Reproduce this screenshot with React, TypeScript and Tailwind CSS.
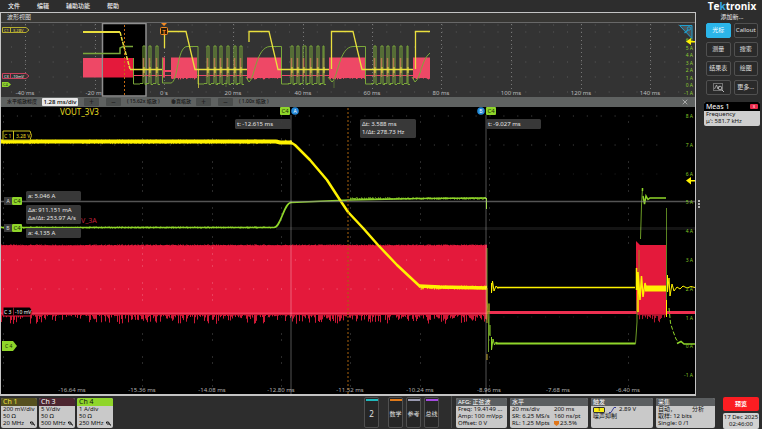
import React from 'react';
import { X } from 'lucide-react';

const YELLOW = '#fff200';
const GREEN = '#8fd52a';
const RED = '#e4193b';
const PINK = '#ee4866';

// small deterministic noise source for the traces
const noise = (i: number) => {
  const v = Math.sin(i * 12.9898) * 43758.5453;
  return v - Math.floor(v);
};

const range = (from: number, to: number, step: number) => {
  const out: number[] = [];
  for (let v = from; v <= to; v += step) out.push(v);
  return out;
};

const drips = (from: number, to: number, base: number, depth: number) =>
  range(from, to, 1)
    .map(x => `M${x + 0.5} ${base}v${(1 + Math.pow(noise(x), 3) * depth).toFixed(1)}`)
    .join('');

const fuzz = (from: number, to: number, y: number, amp: number) =>
  range(from, to, 1)
    .map(x => `M${x + 0.5} ${(y - noise(x) * amp).toFixed(1)}V${(y + noise(x + 7) * amp).toFixed(1)}`)
    .join('');

const Dots = ({ xs, ys, color }: { xs: number[]; ys: number[]; color: string }) => (
  <path d={xs.map(x => ys.map(y => `M${x} ${y}h1`).join('')).join('')} stroke={color} strokeWidth="1" />
);

const overviewTicks = [
  [25, '-40 ms'], [95, '-20 ms'], [164, '0 s'], [233, '20 ms'], [303, '40 ms'],
  [372, '60 ms'], [441, '80 ms'], [511, '100 ms'], [581, '120 ms'], [650, '140 ms'],
] as const;

const overviewBlocks = [[171, 26], [247, 34], [329, 36], [413, 17]];

const pulses = [
  [143, 145], [149, 151], [156, 158], [207, 209], [214, 216], [220, 222], [227, 229], [234, 236], [240, 242],
  [291, 293], [297, 299], [303, 306], [310, 312], [317, 319], [323, 324],
  [374, 376], [381, 383], [387, 389], [393, 395], [400, 402], [407, 408],
];

const pulsePath = pulses.map(([a, b]) => `M${a - 3} 83.5H${a}V46H${b}V84.5h2`).join('');

const Overview = () => (
  <svg viewBox="1 23 694 74" className="block h-auto w-full bg-[#333333]" fontFamily="Noto Sans, sans-serif">
    <Dots xs={range(11, 690, 13.9)} ys={[25, 32, 47, 62, 77, 92]} color="#5a5a5a" />
    {overviewTicks.map(([x, label]) => (
      <g key={label}>
        <path d={`M${x + 0.5} 24V90`} stroke="#777" strokeDasharray="1 3" />
        <text x={x} y="95" fontSize="6" fill="#bdbdbd" textAnchor="middle">{label}</text>
      </g>
    ))}
    <rect x="83" y="58" width="20" height="19.5" fill={PINK} />
    {overviewBlocks.map(([x, w]) => (
      <g key={x}>
        <rect x={x} y="57.5" width={w} height="20" fill={PINK} />
        <path d={drips(x, x + w - 1, 77, 1.5)} stroke={PINK} />
      </g>
    ))}
    <rect x="162" y="57.5" width="3" height="20" fill={PINK} />
    <path d="M165 71h6" stroke={PINK} strokeWidth="2" />
    <rect x="102.5" y="23.5" width="43.5" height="72.5" fill="#000" stroke="#8f8f8f" strokeWidth="1.5" />
    <rect x="103" y="58" width="30" height="19.5" fill={RED} />
    <path d="M133 75.5H430" stroke={PINK} strokeWidth="1" />
    {pulses.map(([a]) => (
      <path key={a} d={`M${a + 0.5} 58V77`} stroke={PINK} strokeWidth="1.5" />
    ))}
    <g fill="none" stroke="#7ba83a" strokeWidth="1">
      <path d="M83 53.5H120V48L123 46.5H133" strokeWidth="1.5" />
      <path d="M133.500 58V84H140" />
      <path d={pulsePath} />
      <path d="M162.500 58V83H171C178 82 177 47 187 46.500H198V84H204" />
      <path d="M246 77L249 82C255 78 256 47 270 46.500H281.500V84H289" />
      <path d="M328 77L332 82C338 78 339 47 353 46.500H365.500V84H372" />
      <path d="M412 77L415 82C421 78 421 60 430 53" />
      <path d="M334 80V88M226 80V87" strokeWidth="0.5" />
    </g>
    <g fill="none" stroke="#e9df3e">
      <path d="M83 32H120" strokeWidth="2" />
      <path d="M120 32L130 69" strokeWidth="1.5" strokeDasharray="4 1" />
      <path d="M130 69.500H162" strokeWidth="1.5" />
      <path d="M164.500 48V31.500H186L195 69.500H247" strokeWidth="1.3" />
      <path d="M249 42V31.500H269L278 69.500H329" strokeWidth="1.3" />
      <path d="M331.500 69V31.500H353L362 69.500H413" strokeWidth="1.3" />
      <path d="M415.500 69V31.500H430" strokeWidth="1.3" />
      <path d={pulses.map(([a]) => `M${a + 1} 67v6`).join('')} />
      <path d="M198.500 70V88" strokeWidth="0.7" />
    </g>
    <path d="M124.500 25V96" stroke="#c66a12" strokeDasharray="2 2" />
    <path d="M161 23h6l-3 3z" fill="#f28a24" />
    <rect x="160.500" y="27.500" width="7" height="7" rx="1" fill="#2a1a08" stroke="#f28a24" />
    <text x="164" y="33.500" fontSize="6" fontWeight="700" fill="#f28a24" textAnchor="middle">T</text>

    <path d="M2.500 27.500H26L29 30L26 32.500H2.500Z" fill="#333" stroke="#b5ad2e" />
    <path d="M10.500 27.500v5" stroke="#b5ad2e" />
    <text x="4" y="32" fontSize="4" fill="#e9df3e">C1</text>
    <text x="13" y="32" fontSize="4" fill="#e9df3e">3.28V</text>
    <path d="M2.500 73.500H26L29 76L26 78.500H2.500Z" fill="#333" stroke="#c9405b" />
    <path d="M10.500 73.500v5" stroke="#c9405b" />
    <text x="4" y="78" fontSize="4" fill="#eee">C3</text>
    <text x="12" y="78" fontSize="4" fill="#eee">-10mV</text>
    <path d="M2 82H8L11 84.500L8 87H2Z" fill={GREEN} />
    <text x="3" y="86" fontSize="4" fill="#233">C4</text>

    <path d="M679.500 25.500H692V38.500Z" fill="#4b5459" stroke="#1f9fce" />
    <circle cx="689" cy="28.500" r="1.700" fill="none" stroke="#1f9fce" />
    <path d="M688 30L684.500 33" stroke="#1f9fce" strokeWidth="1.200" />
    {['6 A', '5 A', '4 A', '3 A', '2 A', '1 A', '0 A', '-1 A'].map((t, i) => (
      <text key={t} x="693" y={42 + i * 7.5} fontSize="5" fill="#8fce32" textAnchor="end">{t}</text>
    ))}
    <path d="M686 41.500L691 38V41H695V42.500H691V45Z" fill={YELLOW} />
  </svg>
);

const mainTicks = [
  [72, '-16.64 ms'], [142, '-15.36 ms'], [212, '-14.08 ms'], [281, '-12.80 ms'], [350, '-11.52 ms'],
  [420, '-10.24 ms'], [489, '-8.96 ms'], [558, '-7.68 ms'], [628, '-6.40 ms'],
] as const;

const Readout = ({ x, y, w, lines }: { x: number; y: number; w: number; lines: string[] }) => (
  <g>
    <rect x={x} y={y} width={w} height={lines.length * 9 + 1} rx="1.500" fill="#3b3b3b" fillOpacity="0.95" />
    {lines.map((line, i) => (
      <text key={line} x={x + 2} y={y + 7 + i * 8} fontSize="6" fill="#e6e6e6">{line}</text>
    ))}
  </g>
);

const SourceBadge = ({ x, y }: { x: number; y: number }) => (
  <g>
    <rect x={x} y={y} width="10" height="8" rx="1" fill={GREEN} />
    <text x={x + 5} y={y + 6} fontSize="6" fill="#1c2c08" textAnchor="middle">C4</text>
  </g>
);

const CursorKnob = ({ x, name }: { x: number; name: string }) => (
  <g>
    <circle cx={x} cy="111" r="3.800" fill="#2387d6" />
    <text x={x} y="113" fontSize="5" fill="#fff" textAnchor="middle">{name}</text>
  </g>
);

const ZoomView = () => (
  <svg viewBox="1 107 694 287" className="block h-auto w-full bg-black" fontFamily="Noto Sans, sans-serif">
    <Dots xs={range(3, 670, 13.9)} ys={[116, 145]} color="#4a4a4a" />
    <Dots xs={range(3, 670, 13.9)} ys={[174, 317]} color="#222" />
    <Dots
      xs={[3, 142, 212, 281, 350, 420, 489, 628]}
      ys={[122, 139, 162, 168, 179, 185, 191, 208, 214, 220, 237, 243, 334, 340, 357, 363, 380, 386]}
      color="#555"
    />
    {mainTicks.map(([x, label]) => (
      <text key={label} x={x} y="392" fontSize="6" fill="#b0b0b0" textAnchor="middle">{label}</text>
    ))}
    <text x="60" y="115" fontSize="8" fill="#e8df22">VOUT_3V3</text>
    <text x="81" y="223" fontSize="7" fill="#c4203c">V_3A</text>

    {/* switch node */}
    <rect x="1" y="245.500" width="486" height="69" fill={RED} />
    <path d={fuzz(1, 486, 245.5, 1)} stroke={RED} strokeWidth="1" />
    <path d="M1 313.500H487" stroke="#f23a5a" strokeWidth="2" />
    <path d={drips(1, 486, 314, 9)} stroke="#cf1836" />
    <path d="M487 312.500H695" stroke="#ee2f50" strokeWidth="3" />
    <rect x="636" y="245" width="30.500" height="69" fill={RED} />
    <path d="M636 241L641 246H636Z" fill={RED} />
    <path d={drips(637, 665, 314, 9)} stroke="#b5152f" />
    <Dots xs={range(3, 480, 13.9)} ys={[260, 289]} color="#f06a80" />
    <Dots xs={[142, 212]} ys={[248, 254, 266, 283, 295, 300]} color="#f06a80" />

    {/* load current */}
    <g fill="none" stroke={GREEN}>
      <path d="M1 227.500H274C281 227 284 203 291 202.500L350 200L420 198.500L486 198" strokeWidth="1.700" />
      <path d={fuzz(1, 273, 227.5, 1.2)} strokeWidth="0.700" />
      <path d={fuzz(350, 485, 198.5, 1.3)} strokeWidth="0.800" />
      <path d="M486.500 198V209" />
      <path d="M487 248V300L488.500 320V352M489 303V335" stroke="#6d9c26" />
      <path d="M490 325V336M491.500 337V350L493 339L494.500 345L496 342L498 343.500" />
      <path d="M496 343.500H635.500" strokeWidth="2" />
      <path d="M635.500 344L637 322V300M640.500 239L641.500 205L642.500 188" stroke="#6d9c26" />
      <path d="M642.500 188V191M643 196L644.500 204L646 196L648 199.500L650 198H666" strokeWidth="1.500" />
      <path d="M639 300V250" stroke="#8f8d20" />
      <path d="M666.500 208V315" stroke="#5a8420" />
      <path d="M669 308L670.500 323L673 331L676 339L679 343" strokeDasharray="4 2" />
      <path d="M677 343.500L681 341.500L684 344H695" strokeWidth="1.500" />
    </g>

    {/* output rail */}
    <g fill="none" stroke={YELLOW}>
      <path d="M1 141.500H276L280 142.500H292" strokeWidth="4" />
      <path d={fuzz(1, 290, 141.8, 2.4)} strokeWidth="0.600" />
      <path d="M291 142.500L295 145L310 160L327 180L340 200L348 212L363 228L378 245L397 265L420 286.500" strokeWidth="2.500" strokeLinejoin="round" />
      <path d="M419 286L440 287L487 288" strokeWidth="3.500" />
      <path d={fuzz(421, 486, 287.5, 2.2)} strokeWidth="0.700" />
      <path d="M487 288V323M487 354V360M489 304V312" stroke="#c2a51c" />
      <path d="M491.500 283V293L492.500 281L494 291L496 286L498 288.500" />
      <path d="M497 287.500H635" strokeWidth="1.500" />
      <path d="M636.500 290V268M638 312V272L640 300L641.500 276L643 297L645 283L647 291" strokeWidth="1.500" />
      <path d="M645 288.500H666" strokeWidth="6" />
      <path d="M666.500 300V317M667.500 275V292L669 278L670 296L672 284L674 291L677 287L680 289L683 286L687 288L691 286.500L695 287.500" />
    </g>

    {/* cursors */}
    <path d="M1 201.500H695" stroke="#8c8c8c" strokeOpacity="0.600" strokeWidth="1.500" />
    <path d="M276 228.500H695" stroke="#fff" strokeOpacity="0.080" strokeWidth="3" />
    <path d="M291 115V394M486 115V394" stroke="#fff" strokeOpacity="0.160" strokeWidth="2" />
    <path d="M348 108V394" stroke="#a8620f" strokeDasharray="2 2" />
    <SourceBadge x={280} y={107} />
    <CursorKnob x={295} name="A" />
    <CursorKnob x={481} name="B" />
    <SourceBadge x={486} y={107} />
    <Readout x={235} y={119} w={56} lines={['t: -12.615 ms']} />
    <Readout x={360} y={119} w={56} lines={['Δt: 3.588 ms', '1/Δt: 278.73 Hz']} />
    <Readout x={486} y={119} w={55} lines={['t: -9.027 ms']} />
    <Readout x={26} y={191} w={55} lines={['a: 5.046 A']} />
    <Readout x={26} y={205} w={55} lines={['Δa: 911.151 mA', 'Δa/Δt: 253.97 A/s']} />
    <Readout x={26} y={228} w={55} lines={['a: 4.135 A']} />
    {[['A', 197], ['B', 224]].map(([name, y]) => (
      <g key={name}>
        <rect x="4" y={y} width="8" height="8" fill="#3b3b3b" />
        <text x="8" y={Number(y) + 6} fontSize="5" fill="#ddd" textAnchor="middle">{name}</text>
        <SourceBadge x={12} y={Number(y)} />
      </g>
    ))}

    {/* channel handles */}
    <path d="M3 131H30Q33 135.500 30 140H3Z" fill="#000" stroke="#c9bf1c" />
    <path d="M13.500 131v9" stroke="#c9bf1c" />
    <text x="4" y="138" fontSize="5" fill="#e8df22">C 1</text>
    <text x="16" y="138" fontSize="5" fill="#e8df22">3.28 V</text>
    <path d="M3 307H30Q34 311.500 30 316H3Z" fill="#000" stroke={RED} />
    <path d="M13.500 307v9" stroke="#8a1428" />
    <text x="4" y="314" fontSize="5" fill="#fff">C 3</text>
    <text x="15" y="314" fontSize="5" fill="#fff">-10 mV</text>
    <path d="M2 341H13L17 346L13 351H2Z" fill={GREEN} />
    <text x="5" y="348" fontSize="5" fill="#1c2c08">C 4</text>

    {['8 A', '7 A', '6 A', '5 A', '4 A', '3 A', '2 A', '1 A', '0 A', '-1 A'].map((t, i) => (
      <text key={t} x="693" y={118 + i * 28.8} fontSize="5" fill="#84c728" textAnchor="end">{t}</text>
    ))}
    <path d="M686 180.500L691 177V180H695V181.500H691V184.500Z" fill={YELLOW} />
  </svg>
);

const ZoomStep = ({ label, sign }: { label: string; sign: string }) => (
  <button aria-label={label} className="flex h-2 w-[15px] items-center justify-center rounded-[1px] bg-[#4a4d4c] text-[8px] leading-none text-[#222]">
    {sign}
  </button>
);

const ZoomBar = () => (
  <div className="flex h-[10px] items-center bg-[#5f6261] px-[6px] text-[5px] font-medium text-[#151515]">
    <label htmlFor="zoom-scale" className="w-[35px] whitespace-nowrap">水平缩放标度</label>
    <input
      id="zoom-scale"
      defaultValue="1.28 ms/div"
      className="h-2 w-9 rounded-[1px] bg-[#e8e8e8] text-center text-[6px] leading-none text-black"
    />
    <div className="ml-[6px] flex gap-[7px]">
      <ZoomStep label="增加水平缩放" sign="+" />
      <ZoomStep label="减少水平缩放" sign="−" />
    </div>
    <span className="ml-[6px] w-[44px] whitespace-nowrap">( 15.62x 缩放 )</span>
    <span className="w-[25px] whitespace-nowrap">垂直缩放</span>
    <div className="flex gap-[7px]">
      <ZoomStep label="增加垂直缩放" sign="+" />
      <ZoomStep label="减少垂直缩放" sign="−" />
    </div>
    <span className="ml-[6px] whitespace-nowrap">( 1.00x 缩放 )</span>
    <button aria-label="关闭缩放" className="ml-auto text-[#d0d0d0]">
      <X className="h-2 w-2" />
    </button>
  </div>
);

const DockButton = ({ children, active, label }: { children: React.ReactNode; active?: boolean; label?: string }) => (
  <button
    aria-label={label}
    className={`flex h-[15px] items-center justify-center rounded-[2px] border text-[6px] whitespace-nowrap ${
      active ? 'border-[#2bb5e9] bg-[#2bb5e9] text-white' : 'border-[#505050] bg-[#2a2a2a] text-[#e0e0e0]'
    }`}
  >
    {children}
  </button>
);

const Dock = () => (
  <aside className="w-[60px] shrink-0 px-[2px]">
    <div className="flex h-3 items-center justify-center font-['Open_Sans',sans-serif] text-[10px] leading-none font-bold text-white">
      <span>Te<span className="text-[#35a8e0]">k</span>tronix</span>
    </div>
    <div className="h-[11px] pt-[1px] text-center text-[6px] leading-[8px] text-[#eeeeee]">添加新...</div>
    <div className="grid grid-cols-2 gap-x-[3px] gap-y-1 px-[2px]">
      <DockButton active>光标</DockButton>
      <DockButton>Callout</DockButton>
      <DockButton>测量</DockButton>
      <DockButton>搜索</DockButton>
      <DockButton>结果表</DockButton>
      <DockButton>绘图</DockButton>
      <DockButton label="缩放区域">
        <svg viewBox="0 0 13 11" className="h-[11px] w-[13px]" fill="none" stroke="#b8b8b8">
          <rect x="1.500" y="1.500" width="9" height="7" strokeDasharray="1 1" />
          <path d="M2.500 7L4.500 3L6 7L7.500 4" strokeWidth="0.800" />
          <circle cx="8" cy="6" r="1.800" strokeWidth="0.900" />
          <path d="M9.500 7.500L12 10" />
        </svg>
      </DockButton>
      <DockButton>更多...</DockButton>
    </div>
    <section className="mt-[7px] overflow-hidden rounded-[2px] bg-[#cfcfcf] text-[6px] leading-[7px] text-[#111]">
      <header className="flex h-[9px] items-center justify-between bg-black px-[2px] text-[7px] text-white">
        Meas 1
        <span className="flex h-[5px] w-2 items-center justify-center rounded-[1px] bg-[#e92b4b] text-[4px] leading-none">3</span>
      </header>
      <div className="px-[2px] pb-[1px]">
        <p>Frequency</p>
        <p>μ': 581.7 kHz</p>
      </div>
    </section>
  </aside>
);

const channels = [
  { name: 'Ch 1', head: 'bg-[#55501f] text-[#f0e442]', scale: '200 mV/div', bw: '20 MHz' },
  { name: 'Ch 3', head: 'bg-[#4c2630] text-white', scale: '5 V/div', bw: '500 MHz' },
  { name: 'Ch 4', head: 'bg-[#8fd52a] text-[#111]', scale: '1 A/div', bw: '250 MHz' },
];

const addButtons = [
  { name: '2', bar: 'bg-[#1fb9bd]', cls: 'mr-[6px] text-[8px]' },
  { name: '数学', bar: 'bg-[#e07a1a]', cls: 'text-[6px]' },
  { name: '参考', bar: 'bg-[#9a9ab0]', cls: 'text-[6px]' },
  { name: '总线', bar: 'bg-[#a44be0]', cls: 'text-[6px]' },
];

const Panel = ({ title, className, children }: { title: string; className: string; children: React.ReactNode }) => (
  <section className={`h-[30px] shrink-0 overflow-hidden rounded-[2px] bg-[#c9c9c9] text-[6px] leading-[7px] text-[#111] ${className}`}>
    <h2 className="h-2 bg-[#5b5e60] px-[2px] leading-[8px] text-white">{title}</h2>
    <div className="px-[2px] whitespace-nowrap">{children}</div>
  </section>
);

const BottomBar = () => (
  <footer className="flex items-start pr-[3px] pb-[1px] pl-[1px]">
    <div className="flex gap-[2px] pt-[2px]">
      {channels.map(ch => (
        <section key={ch.name} className="h-[30px] w-9 overflow-hidden rounded-[2px] bg-[#c9c9c9] text-[6px] leading-[7px] text-[#111]">
          <h2 className={`h-2 px-[2px] text-[7px] leading-[8px] ${ch.head}`}>{ch.name}</h2>
          <div className="px-[2px] whitespace-nowrap">
            <p>{ch.scale}</p>
            <p>50 Ω</p>
            <p className="flex items-center justify-between">
              {ch.bw}
              <svg viewBox="0 0 5 5" className="h-[5px] w-[5px]" fill="none" stroke="#111">
                <path d="M0.500 2.500V1h2L4 4h1M1 3h2" />
              </svg>
            </p>
          </div>
        </section>
      ))}
    </div>
    <div className="ml-auto flex gap-[3px] pt-[1px]">
      {addButtons.map(b => (
        <button key={b.name} className={`flex h-[31px] w-[15px] flex-col items-center rounded-[2px] border border-[#505050] bg-[#262626] text-[#e0e0e0] ${b.cls}`}>
          <span className={`mt-[1px] h-[2px] w-3 shrink-0 ${b.bar}`} />
          <span className="flex flex-1 items-center whitespace-nowrap">{b.name}</span>
        </button>
      ))}
    </div>
    <div className="ml-[12px] flex gap-[3px] border-l border-[#4a4a4a] pt-[2px] pl-1">
      <Panel title="AFG: 正弦波" className="w-[51px]">
        <p>Freq: 19.4149 ...</p>
        <p>Amp: 100 mVpp</p>
        <p>Offset: 0 V</p>
      </Panel>
      <Panel title="水平" className="w-[78px]">
        <div className="grid grid-cols-[42px_1fr]">
          <span>20 ms/div</span><span>200 ms</span>
          <span>SR: 6.25 MS/s</span><span>160 ns/pt</span>
          <span>RL: 1.25 Mpts</span>
          <span className="flex items-center gap-[1px]">
            <svg viewBox="0 0 5 5" className="h-[5px] w-[5px]"><path d="M0 0h5v3L2.500 5L0 3z" fill="#e0761a" /></svg>
            23.5%
          </span>
        </div>
      </Panel>
      <Panel title="触发" className="w-[62px]">
        <p className="flex items-center">
          <span className="flex h-[6px] w-3 items-center justify-center rounded-[1px] border border-[#333] bg-[#f7ec13]">1</span>
          <svg viewBox="0 0 7 6" className="ml-1 h-[6px] w-[7px]" fill="none" stroke="#3b3f9a"><path d="M0 5.500h2L5 0.500h2" /></svg>
          <span className="ml-[3px]">2.89 V</span>
        </p>
        <p>噪声抑制</p>
      </Panel>
      <Panel title="采集" className="w-[59px]">
        <p className="flex gap-4"><span>自动，</span><span>分析</span></p>
        <p>取样: 12 bits</p>
        <p>Single: 0 /1</p>
      </Panel>
    </div>
    <div className="ml-2 flex w-9 shrink-0 flex-col gap-[2px] pt-[1px] text-[6px]">
      <button className="h-[14px] rounded-[2px] bg-[#fb1d22] font-bold text-white">预览</button>
      <div className="rounded-[2px] bg-[#d2d2d2] py-[1px] text-center leading-[7px] whitespace-nowrap text-[#111]">
        <p>17 Dec 2025</p>
        <p>02:46:00</p>
      </div>
    </div>
  </footer>
);

const App = () => (
  <div className="flex min-h-screen flex-col bg-[#2d2d2d] font-['Noto_Sans','Noto_Sans_CJK_SC',sans-serif]">
    <div className="flex">
      <main className="min-w-0 flex-1">
        <nav className="flex h-3 items-center gap-[17px] px-2 text-[6px] font-medium text-[#eeeeee]">
          <button>文件</button>
          <button>编辑</button>
          <button>辅助功能</button>
          <button>帮助</button>
        </nav>
        <div className="border border-b-2 border-[#c4c4c4]">
          <h1 className="h-[10px] border-b border-[#686868] bg-[#373633] pl-[6px] text-[6px] leading-[9px] text-[#dddddd]">波形视图</h1>
          <Overview />
          <ZoomBar />
          <ZoomView />
        </div>
      </main>
      <div className="flex w-[6px] shrink-0 flex-col items-center justify-center gap-[1px] pt-[11px]">
        <span className="h-[2px] w-[2px] bg-[#b0b0b0]" />
        <span className="h-[2px] w-[2px] bg-[#b0b0b0]" />
        <span className="h-[2px] w-[2px] bg-[#b0b0b0]" />
      </div>
      <Dock />
    </div>
    <BottomBar />
  </div>
);

export default App;
